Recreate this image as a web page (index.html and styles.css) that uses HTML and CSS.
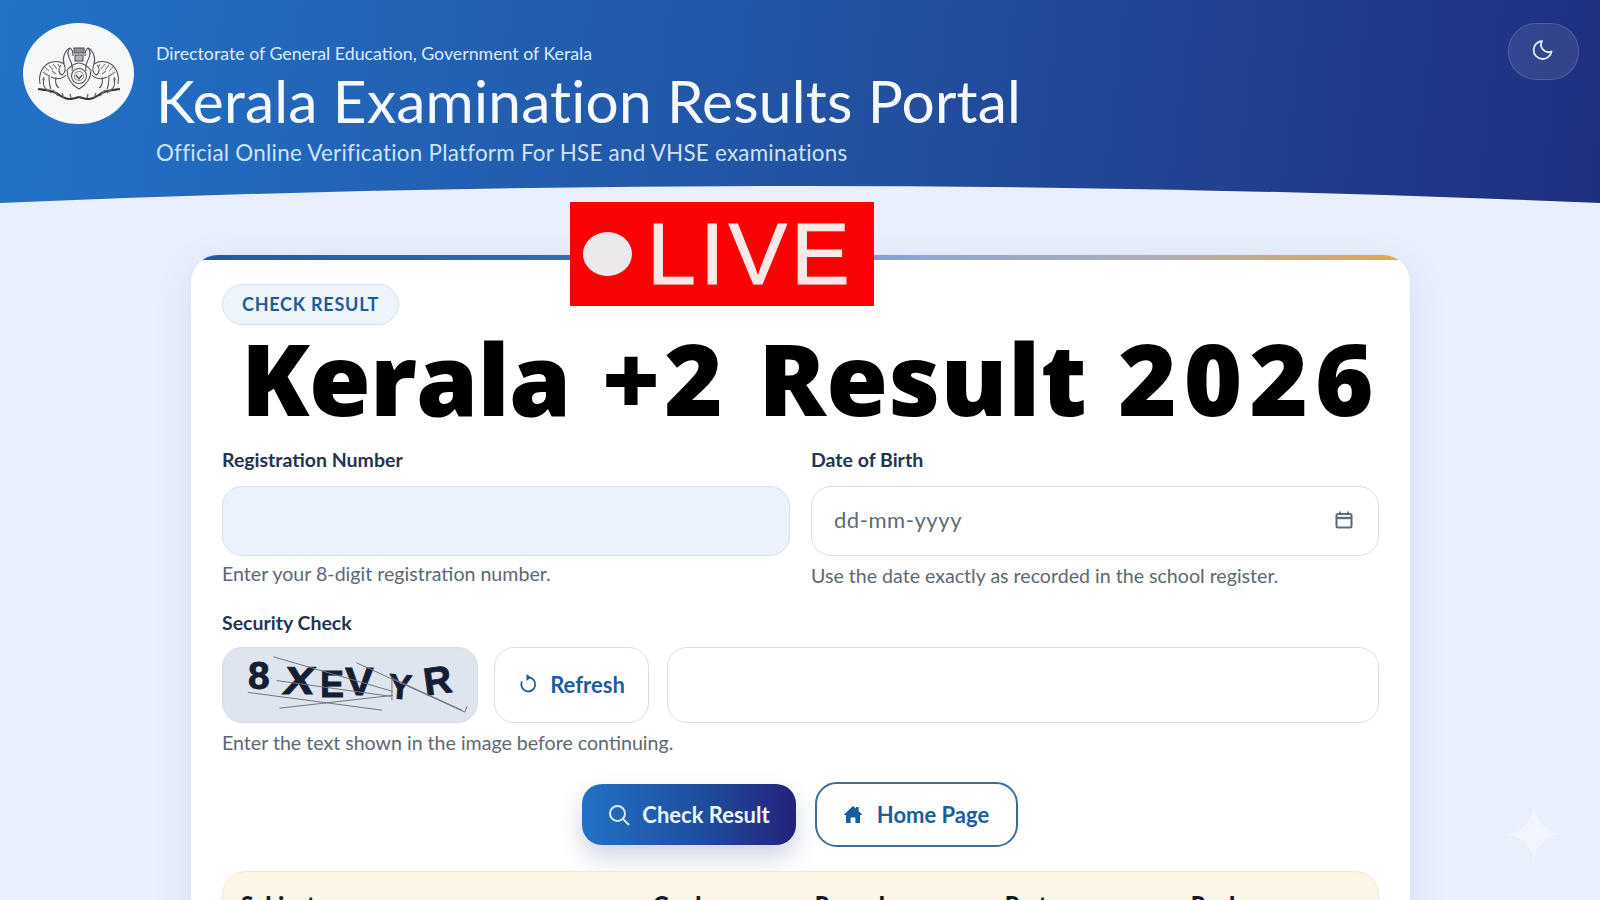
FILE: index.html
```html
<!DOCTYPE html>
<html lang="en">
<head>
<meta charset="utf-8">
<title>Kerala Examination Results Portal</title>
<link rel="stylesheet" href="styles.css">
</head>
<body>
<header class="hero">
  <div class="logo">
    <svg class="emblem" viewBox="0 0 84 53" fill="none" stroke="#4d5054" stroke-width="1.050">
      <g id="half">
        <path d="M3 37C1 27 6 17 15 15c5-1 9 0 12 2"/>
        <path d="M27 17c-2-6 1-14 6-16 2 1 3 4 3 8"/>
        <path d="M33 1c-3 3-2 8 0 12 2 4 3 7 2 11"/>
        <path d="M7 30c-1 4-1 8 1 11M12 28c0 5 0 10 2 14M19 30c-1 5 0 9 3 11"/>
        <path d="M24 18c-3 3-3 8 1 10 3-2 4-6 2-11"/>
        <path d="M14 30c6 3 11 2 15-2"/>
        <path d="M8 20l4 4M12 18l4 5M16 17l4 5M21 17l2 4M6 25l4 3M30 5l2 4M5 32l3 1M15 24l4 3M9 27l3 2" stroke="#7b7e81"/>
        <path d="M1 42c7 1 13 1 18 4 5 3 8 6 14 6 3 0 6-1 9-2" stroke="#35373a" stroke-width="2.200"/>
        <path d="M8 41l6 5M16 43l5 6M25 46l2 5M33 47l1 4" stroke="#6c6f72" stroke-width="1.300"/>
      </g>
      <use href="#half" transform="matrix(-1 0 0 1 84 0)"/>
      <rect x="37" y="1" width="10" height="5" fill="#8f9295"/>
      <rect x="38" y="8" width="8" height="6" fill="#b5b7b9"/>
      <path d="M30 23c4-4 8-7 12-7s8 3 12 7c0 10-5 15-12 19-7-4-12-9-12-19z"/>
      <circle cx="42" cy="29" r="7.500"/>
      <circle cx="42" cy="29" r="4.500" stroke="#85888b"/>
      <path d="M39 28l3 4 3-4" stroke-width="1.300"/>
    </svg>
  </div>
  <div class="hero-text">
    <p class="dept">Directorate of General Education, Government of Kerala</p>
    <h1 class="portal">Kerala Examination Results Portal</h1>
    <p class="tagline">Official Online Verification Platform For HSE and VHSE examinations</p>
  </div>
  <button class="theme" aria-label="Toggle theme">
    <svg viewBox="0 0 24 24" width="24" height="24" fill="none" stroke="#e6edfb" stroke-width="1.800" stroke-linejoin="round"><path d="M12 3a9 9 0 1 0 9.500 10.500A7.500 7.500 0 0 1 12 3z"/></svg>
  </button>
  <svg class="curve" viewBox="0 0 1600 20" preserveAspectRatio="none"><path d="M0 20V18Q800 -16 1600 18V20z" fill="#e9effc"/></svg>
</header>

<main class="stage">
  <section class="card">
    <div class="accent"></div>
    <span class="pill">CHECK RESULT</span>
    <div class="headline">Kerala <span class="plus">+2</span> <span class="word">Result</span> <span class="year">2026</span></div>

    <div class="two">
      <div class="field">
        <label class="label">Registration Number</label>
        <div class="input filled"></div>
        <p class="hint">Enter your 8-digit registration number.</p>
      </div>
      <div class="field">
        <label class="label">Date of Birth</label>
        <div class="input date">
          <span>dd-mm-yyyy</span>
          <svg viewBox="0 0 18 18" width="18" height="18" fill="none" stroke="#5f6b76" stroke-width="2"><rect x="1.500" y="3" width="15" height="13.500" rx="1.500"/><path d="M1.500 7h15" stroke-width="2.400"/><path d="M5 .5v3M13 .5v3" stroke-width="1.800"/></svg>
        </div>
        <p class="hint second">Use the date exactly as recorded in the school register.</p>
      </div>
    </div>

    <label class="label sec">Security Check</label>
    <div class="captcha-row">
      <div class="captcha">
        <span class="c a">8</span><span class="c b">X</span><span class="c d">E</span><span class="c e">V</span><span class="c f">Y</span><span class="c g">R</span>
        <svg class="noise" viewBox="0 0 255 75" fill="none" stroke="#6f757c" stroke-width="1"><path d="M50 9L171 44M53 33L169 49M24 45L160 63M56 61L171 48M134 15L244 65M171 31L241 63M170 29V53M246 59L244 65"/></svg>
      </div>
      <button class="refresh">
        <svg viewBox="0 0 20 20" width="20" height="20" fill="none" stroke="#1c5c9c" stroke-width="1.800"><path d="M10.500 3.400a7 7 0 1 1-6.600 4"/><path d="M8.500 0l4.500 3.500-4.500 3.500z" fill="#1c5c9c" stroke="none"/></svg>
        <span>Refresh</span>
      </button>
      <div class="input code"></div>
    </div>
    <p class="hint cap">Enter the text shown in the image before continuing.</p>

    <div class="actions">
      <button class="primary">
        <svg viewBox="0 0 24 24" width="24" height="24" fill="none" stroke="#d9e9fb" stroke-width="2"><circle cx="10.500" cy="10.500" r="7.500"/><path d="M16 16l6 6"/></svg>
        <span>Check Result</span>
      </button>
      <button class="ghost">
        <svg viewBox="0 0 20 20" width="20" height="20" fill="#1c5c9c"><path d="M10 1l3 2.600V2h2.600v3.900L19.500 10H17v8h-4.600v-5.400H7.600V18H3v-8H.5z"/></svg>
        <span>Home Page</span>
      </button>
    </div>

    <div class="results">
      <span class="col subject">Subject</span>
      <span class="col grade">Grade</span>
      <span class="col remarks">Remarks</span>
      <span class="col part">Part</span>
      <span class="col rank">Rank</span>
    </div>
  </section>
  <div class="live">
    <span class="dot"></span><span class="live-word">LIVE</span>
  </div>
  <svg class="spark" viewBox="0 0 60 60"><path d="M30 0C32 18 42 28 60 30 42 32 32 42 30 60 28 42 18 32 0 30 18 28 28 18 30 0z" fill="#f2f5fd"/></svg>
</main>
</body>
</html>
```
FILE: styles.css
```css
* { box-sizing: border-box; }
html, body { margin: 0; height: 900px; overflow: hidden; }
body {
  background: #e9effc;
  font-family: "Lato", "Noto Sans", "Liberation Sans", sans-serif;
  position: relative;
}
p, h1 { margin: 0; }
button { font: inherit; cursor: pointer; }

.hero {
  position: relative;
  height: 205px;
  padding: 23px 21px 0 23px;
  display: flex;
  align-items: flex-start;
  background: linear-gradient(97deg, #2272c8 0%, #22509f 55%, #1f2f80 100%);
  color: #fff;
}
.logo {
  width: 111px;
  height: 101px;
  flex: none;
  border-radius: 50%;
  background: #f6f7f9;
  display: flex;
  align-items: center;
  justify-content: center;
}
.emblem { width: 84px; height: 53px; }
.hero-text { margin-left: 22px; padding-top: 20px; flex: 1; }
.dept { font-size: 17.750px; line-height: 20px; color: #dceafc; }
.portal { font-size: 58.600px; font-weight: 400; line-height: 66px; margin-top: 4px; color: #f6f9ff; letter-spacing: .2px; }
.tagline { font-size: 22.400px; line-height: 30px; margin-top: 5px; color: #cfe2fb; letter-spacing: .25px; }
.theme {
  width: 71px;
  height: 57px;
  flex: none;
  border-radius: 28px;
  background: rgba(255,255,255,.09);
  border: 1px solid rgba(255,255,255,.14);
  display: flex;
  align-items: center;
  justify-content: center;
  padding: 0 4px 4px 0;
}
.curve { position: absolute; left: 0; bottom: 0; width: 100%; height: 20px; display: block; }

.stage { position: relative; height: 695px; padding: 49px 189px 0 190px; }
.card {
  position: relative;
  height: 720px;
  padding: 29px 31px 0 31px;
  background: #fff;
  border: 1px solid #dfe6f1;
  border-radius: 28px;
  overflow: hidden;
  box-shadow: 0 10px 40px rgba(40,70,140,.09);
}
.accent {
  position: absolute;
  left: 0; right: 0; top: 0;
  height: 5px;
  background: linear-gradient(90deg, #1d5da6 0%, #2e6bb6 30%, #8ea6d2 60%, #b0adb8 80%, #e8a63a 100%);
}
.pill {
  display: inline-block;
  height: 41px;
  padding: 0 19px;
  line-height: 39px;
  font-size: 18px;
  font-weight: 700;
  letter-spacing: .75px;
  color: #1f5b97;
  background: #eef4fb;
  border: 1px solid #d3e0ee;
  border-radius: 21px;
  vertical-align: top;
}
.headline {
  margin: 0 0 0 19px;
  height: 100px;
  font-family: "Open Sans", "Noto Sans", sans-serif;
  font-weight: 800;
  font-size: 100px;
  line-height: 104px;
  color: #000;
  white-space: nowrap;
  letter-spacing: -.8px;
  word-spacing: 6px;
}
.plus { letter-spacing: 4px; }
.word { letter-spacing: .4px; }
.year { letter-spacing: 7px; }
.two { display: grid; grid-template-columns: 1fr 1fr; gap: 21px; margin-top: 23px; }
.label { display: block; font-size: 19.500px; font-weight: 700; line-height: 24px; color: #1f3550; }
.input { border: 1.500px solid #d9dfe7; border-radius: 20px; background: #fff; }
.field .input { height: 70px; margin-top: 14px; }
.filled { background: #ebf1fd; }
.date { display: flex; align-items: center; justify-content: space-between; padding: 0 25px 3px 22px; font-size: 22px; letter-spacing: .55px; color: #5f6b76; }
.hint { font-size: 19.600px; line-height: 24px; color: #5d6873; margin-top: 6px; }
.hint.second { margin-top: 8px; }
.sec { margin-top: 23px; }
.captcha-row { display: flex; gap: 16px; margin-top: 12px; height: 76px; }
.captcha {
  position: relative;
  width: 256px;
  flex: none;
  background: #dfe5ef;
  border: 1.500px solid #d7dde6;
  border-radius: 20px;
  overflow: hidden;
  color: #141d33;
  font-family: "Liberation Sans", sans-serif;
  font-weight: 700;
  font-size: 39px;
  -webkit-text-stroke: .8px #141d33;
}
.c { position: absolute; line-height: 40px; transform-origin: left top; }
.a { left: 25px; top: 8px; }
.b { left: 64px; top: 13px; transform: scaleX(1.200) skewX(-8deg); }
.d { left: 97px; top: 17px; font-size: 36px; }
.e { left: 122px; top: 14px; transform: scaleX(1.100); }
.f { left: 167px; top: 18px; font-size: 35px; transform: rotate(4deg); }
.g { left: 198px; top: 15px; transform: rotate(-8deg); }
.noise { position: absolute; inset: 0; width: 100%; height: 100%; }
.refresh {
  width: 155px;
  flex: none;
  display: flex;
  align-items: center;
  justify-content: center;
  gap: 12px;
  background: #fff;
  border: 1.500px solid #d9dfe7;
  border-radius: 20px;
  color: #1c5c9c;
  font-size: 22px;
  font-weight: 700;
  padding: 0 0 2px;
}
.code { flex: 1; margin-left: 2px; }
.hint.cap { margin-top: 8px; }
.actions { display: flex; justify-content: center; align-items: center; gap: 19px; margin-top: 27px; padding-right: 2px; }
.primary, .ghost {
  display: flex;
  align-items: center;
  justify-content: center;
  font-size: 22px;
  font-weight: 700;
  padding: 0;
}
.primary {
  width: 214px;
  height: 61px;
  gap: 11px;
  color: #edf5ff;
  border: 0;
  border-radius: 20px;
  background: linear-gradient(90deg, #2271c7 0%, #1f4f9f 55%, #24217a 100%);
  box-shadow: 0 12px 24px rgba(35,60,130,.22);
}
.ghost {
  width: 203px;
  height: 65px;
  gap: 14px;
  color: #1c5c9c;
  background: #fff;
  border: 2px solid #3f6d92;
  border-radius: 22px;
}
.results {
  position: relative;
  height: 80px;
  margin-top: 24px;
  background: #fdf5e6;
  border: 1.500px solid #f6e7cc;
  border-radius: 24px;
  font-size: 22px;
  font-weight: 800;
  color: #0e1a2c;
}
.col { position: absolute; top: 19px; }
.subject { left: 18px; }
.grade { left: 430px; }
.remarks { left: 592px; }
.part { left: 782px; }
.rank { left: 968px; }
.live {
  position: absolute;
  left: 570px;
  top: -3px;
  width: 304px;
  height: 104px;
  display: flex;
  align-items: center;
  padding-left: 13px;
  background: #fb0205;
}
.dot { width: 49px; height: 44px; border-radius: 50%; background: #ebe9e9; flex: none; }
.live-word {
  margin-left: 15px;
  font-family: "Liberation Sans", sans-serif;
  font-size: 88px;
  line-height: 104px;
  color: #fbe9e9;
  letter-spacing: 4px;
  -webkit-text-stroke: 1px #fbe9e9;
}
.spark { position: absolute; left: 1505px; top: 600px; width: 58px; height: 58px; }
```
